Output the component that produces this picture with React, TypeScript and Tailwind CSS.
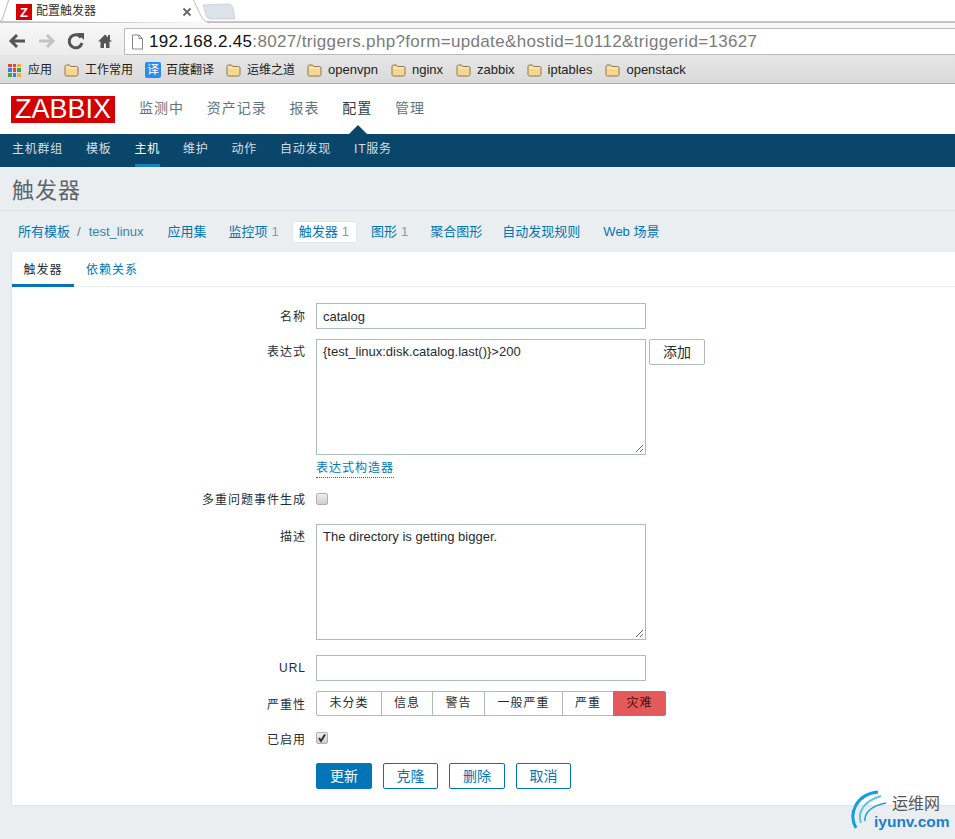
import React from "react";

const font = { fontFamily: '"Liberation Sans", "Noto Sans CJK SC", Arial, sans-serif' };

function Folder() {
  return (
    <svg width="15" height="13" viewBox="0 0 15 13" className="shrink-0">
      <path d="M1 2.5C1 1.6 1.6 1 2.4 1H5.5L6.8 2.5H12.6C13.4 2.5 14 3.1 14 3.9V10.6C14 11.4 13.4 12 12.6 12H2.4C1.6 12 1 11.4 1 10.6Z" fill="#f7d68f" stroke="#8a7a56" strokeWidth="1" />
      <path d="M2 4H13" stroke="#fdf0cb" strokeWidth="1" />
    </svg>
  );
}

function Bookmark({ label, cjk, extra = "" }: { label: string; cjk?: boolean; extra?: string }) {
  return (
    <div className={`flex items-center gap-[6px] ${extra}`}>
      <Folder />
      <span className={`${cjk ? "text-[12px]" : "text-[13px]"} text-[#222]`}>{label}</span>
    </div>
  );
}

function Tabstrip() {
  return (
    <div className="h-[23px] bg-white relative border-b-2 border-[#c4c4c4]">
      <svg width="240" height="24" viewBox="0 0 240 24" className="absolute left-0 top-0">
        <path d="M0 21 L2 20 L9 -1 L193 -1 L201 16 Q204 22 210 23" fill="#fff" stroke="#bdbdbd" strokeWidth="1" />
        <path d="M203 5 L228 4 Q232 4 233 8 L235 19 L210 19 Q207 19 206 15 Z" fill="#dde2e9" stroke="#cfd4da" strokeWidth="1" />
      </svg>
      <div className="absolute left-[16px] top-[4px] w-4 h-4 bg-[#d40000] flex items-center justify-center text-white text-[13px] leading-none font-bold">Z</div>
      <span className="absolute left-[36px] top-[3px] text-[12px] leading-[17px] text-[#333]">配置触发器</span>
      <svg width="10" height="10" viewBox="0 0 10 10" className="absolute left-[182px] top-[7px]">
        <path d="M1.5 1.5L8.5 8.5M8.5 1.5L1.5 8.5" stroke="#666" strokeWidth="1.800" />
      </svg>
    </div>
  );
}

function Toolbar() {
  return (
    <div className="h-[32px] pt-[5px] flex bg-gradient-to-b from-[#f8f8f8] to-[#ececec]">
      <div className="w-[124px] flex items-start">
        <svg width="124" height="24" viewBox="0 0 124 24">
          <path d="M25 13H12M17 7L11 13L17 19" fill="none" stroke="#555" strokeWidth="3" />
          <path d="M39 13H52M47 7L53 13L47 19" fill="none" stroke="#c4c4c4" strokeWidth="3" />
          <path d="M81 9.500A6.500 6.500 0 1 0 82 15" fill="none" stroke="#555" strokeWidth="3" />
          <path d="M77 5L84 5L84 12Z" fill="#555" />
          <path d="M105 6.500L98 13.500H100.500V20H104V15.500H106V20H109.500V13.500H112L105 6.500Z" fill="#555" />
          <rect x="108" y="7" width="2" height="4" fill="#555" />
        </svg>
      </div>
      <div className="flex-1 h-[27px] bg-white border border-[#bbb] border-r-0 rounded-l-[2px] flex items-center pl-[6px]">
        <svg width="13" height="16" viewBox="0 0 13 16" className="shrink-0">
          <path d="M1.500 1H8L11.500 4.500V15H1.500Z" fill="#fff" stroke="#888" />
          <path d="M8 1V4.500H11.500" fill="none" stroke="#888" />
        </svg>
        <span className="ml-[5px] text-[17px] leading-none whitespace-nowrap text-[#7b7b7b] tracking-[0.02em]">
          <span className="text-[#111]">192.168.2.45</span>:8027/triggers.php?form=update&amp;hostid=10112&amp;triggerid=13627
        </span>
      </div>
    </div>
  );
}

function Bookmarks() {
  return (
    <div className="h-[29px] pt-[2px] bg-gradient-to-b from-[#e6e6e6] to-[#dadada] border-b border-[#aaa] flex items-center pl-[8px]">
      <div className="grid grid-cols-3 gap-[1px] w-[13px] h-[13px] shrink-0 mr-[7px]">
        {["#e0463a", "#e0463a", "#f0b428", "#3a7ee0", "#e0463a", "#38a848", "#38a848", "#3a7ee0", "#f0b428"].map((c, i) => (
          <div key={i} style={{ background: c }} />
        ))}
      </div>
      <span className="text-[12px] text-[#222] mr-[12px]">应用</span>
      <div className="flex items-center gap-[12px]">
        <Bookmark label="工作常用" cjk />
        <div className="flex items-center gap-[5px]">
          <div className="w-4 h-4 rounded-[2px] bg-[#2a8cf0] text-white text-[12px] leading-4 text-center">译</div>
          <span className="text-[12px] text-[#222]">百度翻译</span>
        </div>
        <Bookmark label="运维之道" cjk />
        <Bookmark label="openvpn" />
        <Bookmark label="nginx" extra="ml-[1px]" />
        <Bookmark label="zabbix" extra="ml-[1px]" />
        <Bookmark label="iptables" />
        <Bookmark label="openstack" extra="ml-[1px]" />
      </div>
    </div>
  );
}

function ZabbixHeader() {
  const items = ["监测中", "资产记录", "报表", "配置", "管理"];
  return (
    <div className="h-[50px] bg-white flex items-center pl-[11px] relative">
      <div className="w-[104px] h-[27px] bg-[#d40000] text-white text-[27px] leading-[27px] text-center mr-[24px]">ZABBIX</div>
      <div className="flex gap-[22.75px] text-[14px] tracking-[1px] -mt-[2px]">
        {items.map((t) => (
          <span key={t} className={t === "配置" ? "text-[#2f3f47]" : "text-[#5e7684]"}>{t}</span>
        ))}
      </div>
      <div className="absolute left-[349px] bottom-0 w-0 h-0 border-x-[9px] border-x-transparent border-b-[9px] border-b-[#0a466a]" />
    </div>
  );
}

function SubNav() {
  const items = ["主机群组", "模板", "主机", "维护", "动作", "自动发现", "IT服务"];
  return (
    <div className="h-[33px] bg-[#0a466a] flex pl-[12px] gap-[23px] text-[12px] tracking-[0.75px]">
      {items.map((t) =>
        t === "主机" ? (
          <div key={t} className="relative h-[33px] leading-[31px] text-white">
            {t}
            <div className="absolute left-0 right-0 bottom-0 h-[3px] bg-[#1b7fbc]" />
          </div>
        ) : (
          <span key={t} className="leading-[31px] text-[#d5dfe6]">{t}</span>
        )
      )}
    </div>
  );
}

function Breadcrumbs() {
  const Count = ({ n }: { n: string }) => <span className="text-[#8a979f] ml-[4px]">{n}</span>;
  return (
    <div className="h-[42px] flex items-center pl-[12px] text-[13px] text-[#0275b8] border-t border-[#dfe3e6]">
      <span className="ml-[6px]">所有模板</span>
      <span className="text-[#5e7684] ml-[7px] mr-[8px]">/</span>
      <span className="text-[#3b7fb0]">test_linux</span>
      <span className="ml-[24px]">应用集</span>
      <span className="ml-[22px]">监控项<Count n="1" /></span>
      <span className="ml-[13px] pl-[6px] pr-[7px] h-[22px] leading-[20px] bg-white rounded-[2px] border border-[#e3e6e8]">触发器<Count n="1" /></span>
      <span className="ml-[14px]">图形<Count n="1" /></span>
      <span className="ml-[22px]">聚合图形</span>
      <span className="ml-[20px]">自动发现规则</span>
      <span className="ml-[23px]">Web 场景</span>
    </div>
  );
}

function Row({ label, h, mb, children }: { label: string; h: string; mb: string; children: React.ReactNode }) {
  return (
    <div className={`flex ${mb}`}>
      <div className={`w-[294px] text-right text-[12px] text-[#1f2c33] tracking-[1px] ${h}`}>{label}</div>
      <div className="ml-[10px]">{children}</div>
    </div>
  );
}

function Btn({ children, primary, w = "w-[56px]" }: { children: React.ReactNode; primary?: boolean; w?: string }) {
  return (
    <div
      className={`h-[26px] ${w} leading-[24px] text-center text-[14px] rounded-[2px] border border-[#0275b8] ${
        primary ? "bg-[#0275b8] text-white" : "bg-white text-[#0275b8]"
      }`}
    >
      {children}
    </div>
  );
}

function Resize() {
  return (
    <svg width="9" height="9" viewBox="0 0 9 9" className="absolute right-[1px] bottom-[1px]">
      <path d="M1 8L8 1M5 8L8 5" stroke="#666" strokeWidth="1" />
    </svg>
  );
}

function Check({ checked }: { checked?: boolean }) {
  return (
    <div className="w-[12px] h-[12px] rounded-[2px] border border-[#b0b0b0] bg-gradient-to-b from-[#efefef] to-[#cfcfcf] flex items-center justify-center">
      {checked && (
        <svg width="10" height="10" viewBox="0 0 10 10">
          <path d="M2 5L4 8L8 1.500" fill="none" stroke="#333" strokeWidth="2" />
        </svg>
      )}
    </div>
  );
}

function Severity() {
  const items: [string, string][] = [
    ["未分类", "w-[66px]"],
    ["信息", "w-[52px]"],
    ["警告", "w-[53px]"],
    ["一般严重", "w-[79px]"],
    ["严重", "w-[52px]"],
  ];
  return (
    <div className="flex h-[25px] text-[12px] tracking-[1px] text-[#1f2c33]">
      {items.map(([t, w], i) => (
        <div
          key={t}
          className={`${w} leading-[22px] text-center bg-white border border-[#acbbc2] ${i > 0 ? "-ml-px" : ""} ${i === 0 ? "rounded-l-[2px]" : ""}`}
        >
          {t}
        </div>
      ))}
      <div className="w-[53px] -ml-px leading-[22px] text-center bg-[#e45959] border border-[#7a8a94] rounded-r-[2px] text-[#4a0c0c]">灾难</div>
    </div>
  );
}

function Form() {
  const box = "w-[330px] bg-white border border-[#acbbc2] text-[13px] text-[#1f2c33] px-[6px]";
  return (
    <div className="bg-white border-b border-l border-[#dfe4e7] ml-[11px] h-[554px]">
      <div className="h-[35px] border-b border-[#ebeef0] flex text-[12px] tracking-[1px]">
        <div className="w-[62px] h-[35px] leading-[36px] text-center text-[#1f2c33] border-b-[3px] border-[#0275b8]">触发器</div>
        <div className="ml-[12px] leading-[36px] text-[#0275b8]">依赖关系</div>
      </div>
      <div className="pt-[16px]">
        <Row label="名称" h="leading-[28px]" mb="mb-[8px]">
          <div className={`${box} h-[26px] leading-[25px]`}>catalog</div>
        </Row>
        <Row label="表达式" h="leading-[26px]" mb="mb-[5px]">
          <div className="flex gap-[3px] items-start">
            <div className={`${box} h-[116px] leading-[23px] relative`}>
              {"{test_linux:disk.catalog.last()}>200"}
              <Resize />
            </div>
            <div className="w-[56px] h-[26px] leading-[24px] text-center bg-white border border-[#acbbc2] rounded-[2px] text-[14px] text-[#1f2c33]">添加</div>
          </div>
        </Row>
        <Row label="" h="" mb="mb-[14px]">
          <span className="block w-fit text-[12px] text-[#0275b8] tracking-[1px] leading-[17px] border-b border-dotted border-[#0275b8] h-[18px]">表达式构造器</span>
        </Row>
        <Row label="多重问题事件生成" h="leading-[17px]" mb="mb-[15px]">
          <div className="pt-[1px]"><Check /></div>
        </Row>
        <Row label="描述" h="leading-[26px]" mb="mb-[15px]">
          <div className={`${box} h-[116px] leading-[23px] relative`}>
            The directory is getting bigger.
            <Resize />
          </div>
        </Row>
        <Row label="URL" h="leading-[26px]" mb="mb-[10px]">
          <div className={`${box} h-[26px]`} />
        </Row>
        <Row label="严重性" h="leading-[28px]" mb="mb-[13px]">
          <Severity />
        </Row>
        <Row label="已启用" h="leading-[16px]" mb="mb-[15px]">
          <Check checked />
        </Row>
        <div className="flex ml-[304px]">
          <Btn primary>更新</Btn>
          <div className="ml-[11px]"><Btn w="w-[55px]">克隆</Btn></div>
          <div className="ml-[11px]"><Btn>删除</Btn></div>
          <div className="ml-[11px]"><Btn w="w-[55px]">取消</Btn></div>
        </div>
      </div>
    </div>
  );
}

function Watermark() {
  return (
    <div className="absolute left-[850px] top-[790px] w-[105px] h-[49px]">
      <svg width="46" height="46" viewBox="0 0 46 46" className="absolute left-0 top-0">
        <path d="M6 38C-2 24 6 4 28 2" fill="none" stroke="#14a0e0" strokeWidth="3" />
        <path d="M11 33C7 22 14 11 31 6" fill="none" stroke="#5cc0ea" strokeWidth="2" />
        <path d="M15 31C14 24 20 16 36 13" fill="none" stroke="#14a0e0" strokeWidth="1.500" />
      </svg>
      <span className="absolute left-[42px] top-[5px] text-[16px] leading-[18px] text-[#555]">运维网</span>
      <span className="absolute left-[24px] top-[23px] text-[15.500px] leading-[18px] font-bold text-[#1a7fd0] whitespace-nowrap">iyunv.com</span>
    </div>
  );
}

export default function App() {
  return (
    <div style={font} className="relative w-[955px] h-[839px] overflow-hidden bg-[#ebeef0]">
      <Tabstrip />
      <Toolbar />
      <Bookmarks />
      <ZabbixHeader />
      <SubNav />
      <div className="h-[43px] pl-[12px] leading-[47px] text-[22px] text-[#5a676e] tracking-[1px]">触发器</div>
      <Breadcrumbs />
      <Form />
      <Watermark />
    </div>
  );
}
